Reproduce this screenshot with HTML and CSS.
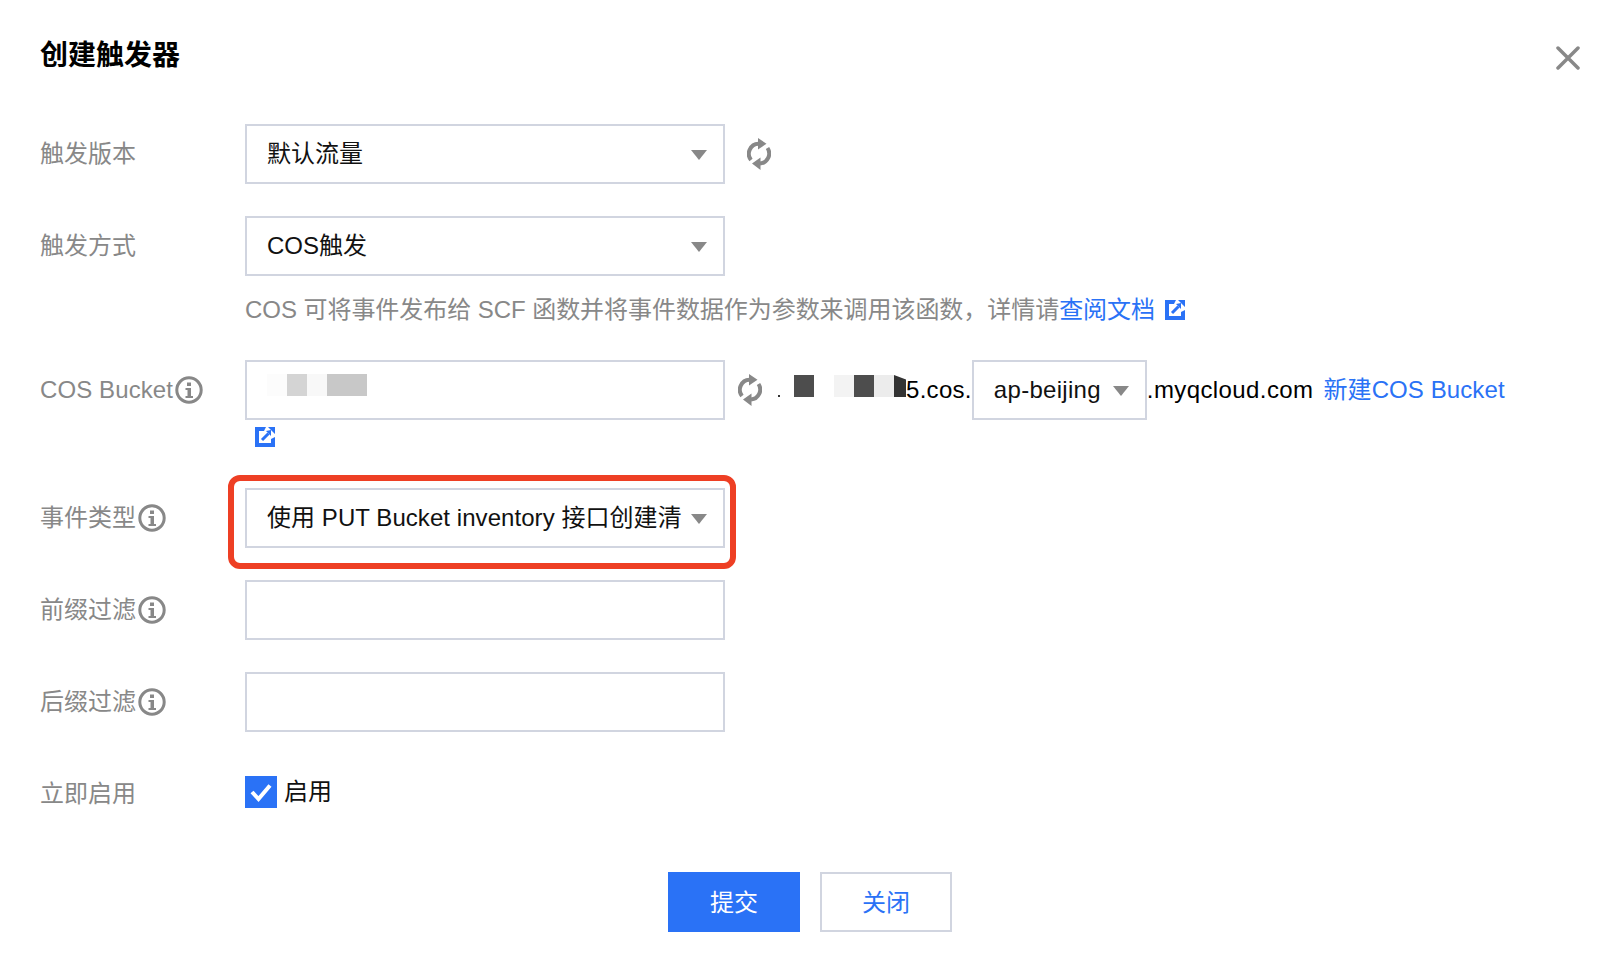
FILE: index.html
```html
<!DOCTYPE html>
<html lang="zh-CN">
<head>
    <meta charset="UTF-8">
    <title>创建触发器</title>
    <link rel="stylesheet" href="styles.css">
</head>
<body>
    <svg class="icon-defs" width="0" height="0">
        <symbol id="icon-refresh" viewBox="0 0 24 32">
            <path d="M4 22A10 10 0 0 1 11.500 5.800M20.500 10A10 10 0 0 1 13 25.500" fill="none" stroke="#888" stroke-width="4"/>
            <path d="M11 0L19.500 5.800L11 11.500ZM13.500 19.500L5 25.500L13.500 32Z" fill="#888"/>
        </symbol>
        <symbol id="icon-info" viewBox="0 0 28 28">
            <circle cx="14" cy="14" r="12.2" fill="none" stroke="#888" stroke-width="3"/>
            <path d="M12 6.500h4v3.500h-4zM10.500 12h5.500v8h2v2h-7.500v-2h2v-6h-2z" fill="#888"/>
        </symbol>
        <symbol id="icon-link" viewBox="0 0 20 20">
            <rect width="20" height="20" fill="#2a72f6"/>
            <path d="M4 4H9L11 0H13L20 7V10L16 12V16H4Z" fill="#fff"/>
            <path d="M7 13L13.500 6.500" fill="none" stroke="#2a72f6" stroke-width="3"/>
            <path d="M11 4L16 3L16 9Z" fill="#2a72f6"/>
        </symbol>
    </svg>

    <div class="dialog">
        <h1>创建触发器</h1>
        <svg class="close" width="24" height="24" viewBox="0 0 24 24">
            <path d="M2 2L22 22M22 2L2 22" stroke="#888" stroke-width="3.500" stroke-linecap="round"/>
        </svg>

        <div class="form-row">
            <div class="form-label">触发版本</div>
            <div class="select">默认流量<i class="arrow"></i></div>
            <svg class="refresh refresh-first"><use href="#icon-refresh"/></svg>
        </div>

        <div class="form-row has-hint">
            <div class="form-label">触发方式</div>
            <div class="select">COS触发<i class="arrow"></i></div>
        </div>
        <div class="hint">
            <span>COS 可将事件发布给 SCF 函数并将事件数据作为参数来调用该函数，详情请</span><a class="link">查阅文档</a>
            <svg class="ext-icon"><use href="#icon-link"/></svg>
        </div>

        <div class="form-row has-ext">
            <div class="form-label"><span class="label-en">COS Bucket</span><svg class="info"><use href="#icon-info"/></svg></div>
            <div class="input mosaic-input">
                <i class="px px-a"></i><i class="px px-b"></i><i class="px px-c"></i><i class="px px-d"></i>
            </div>
            <svg class="refresh"><use href="#icon-refresh"/></svg>
            <div class="mosaic">
                <i class="dot"></i>
                <i class="px px-dark"></i>
                <i class="px px-gap"></i>
                <i class="px px-light"></i>
                <i class="px px-dark"></i>
                <i class="px px-light2"></i>
                <i class="px px-end"></i>
            </div>
            <span class="plain">5.cos.</span>
            <div class="select select-region">ap-beijing<i class="arrow"></i></div>
            <span class="plain domain">.myqcloud.com</span>
            <a class="link new-bucket">新建COS Bucket</a>
        </div>
        <div class="ext-row"><svg class="ext-icon"><use href="#icon-link"/></svg></div>

        <div class="form-row">
            <div class="form-label">事件类型<svg class="info"><use href="#icon-info"/></svg></div>
            <div class="select highlighted">使用 PUT Bucket inventory 接口创建清<i class="arrow"></i></div>
        </div>

        <div class="form-row">
            <div class="form-label">前缀过滤<svg class="info"><use href="#icon-info"/></svg></div>
            <input class="input" type="text">
        </div>

        <div class="form-row">
            <div class="form-label">后缀过滤<svg class="info"><use href="#icon-info"/></svg></div>
            <input class="input" type="text">
        </div>

        <div class="form-row check-row">
            <div class="form-label">立即启用</div>
            <span class="checkbox">
                <svg width="32" height="32" viewBox="0 0 32 32">
                    <path d="M7 16L13.500 23L25 9.500" fill="none" stroke="#fff" stroke-width="4"/>
                </svg>
            </span>
            <span class="check-text">启用</span>
        </div>

        <div class="actions">
            <button class="btn btn-primary" type="button">提交</button>
            <button class="btn" type="button">关闭</button>
        </div>
    </div>
</body>
</html>
```

FILE: styles.css
```css
body {
    margin: 0;
    background-color: #fff;
    font-family: "Liberation Sans", "Noto Sans CJK SC", sans-serif;
    font-size: 24px;
    line-height: 30px;
    color: #000;
}
.icon-defs {
    position: absolute;
}
.dialog {
    position: relative;
    padding: 41px 38px 0 40px;
}
h1 {
    margin: 0 0 53px;
    font-size: 28px;
    line-height: 30px;
    font-weight: bold;
}
.close {
    position: absolute;
    top: 46px;
    right: 38px;
}
.form-row {
    display: flex;
    align-items: center;
    height: 60px;
    margin-bottom: 32px;
}
.form-row.has-hint {
    margin-bottom: 18px;
}
.form-row.has-ext {
    margin-bottom: 7px;
}
.form-label {
    display: flex;
    align-items: center;
    flex: none;
    width: 205px;
    color: #888;
}
.label-en {
    letter-spacing: 0.1px;
}
.info {
    width: 28px;
    height: 28px;
    flex: none;
    margin-left: 2px;
}
.select,
.input {
    box-sizing: border-box;
    flex: none;
    width: 480px;
    height: 60px;
    border: 2px solid #d1d5e0;
    background-color: #fff;
}
.select {
    position: relative;
    padding-left: 20px;
    line-height: 56px;
    color: #111;
}
.input {
    margin: 0;
    padding: 0 20px;
    border-radius: 0;
    outline: none;
}
.arrow {
    position: absolute;
    top: 24px;
    right: 16px;
    border-top: 10px solid #888;
    border-left: 8px solid transparent;
    border-right: 8px solid transparent;
}
.highlighted {
    letter-spacing: 0.06px;
}
.highlighted::after {
    content: "";
    position: absolute;
    top: -15px;
    left: -19px;
    right: -13px;
    bottom: -23px;
    border: 6px solid #ee3f24;
    border-radius: 12px;
}
.refresh {
    width: 24px;
    height: 32px;
    flex: none;
    margin-left: 13px;
}
.refresh-first {
    margin-left: 22px;
}
.mosaic-input {
    display: flex;
    padding-top: 12px;
}
.px {
    display: block;
    flex: none;
    width: 20px;
    height: 22px;
}
.px-a { background-color: #fcfcfc; }
.px-b { background-color: #d4d4d4; }
.px-c { background-color: #f8f8f8; }
.px-d { width: 40px; background-color: #c8c8c8; }
.mosaic {
    display: flex;
    align-items: center;
    margin-left: 16px;
    height: 60px;
    padding-bottom: 8px;
    box-sizing: border-box;
}
.dot {
    width: 2px;
    height: 2px;
    margin: 20px 14px 0 0;
    background-color: #333;
}
.px-dark { background-color: #4d4d4d; }
.px-gap { background-color: #fff; }
.px-light { background-color: #f3f3f3; }
.px-light2 { background-color: #ececec; }
.px-end {
    width: 12px;
    background-color: #333;
    clip-path: polygon(0 0, 100% 20%, 100% 100%, 0 100%);
}
.plain {
    flex: none;
    letter-spacing: 0.3px;
}
.domain {
    letter-spacing: 0.4px;
}
.select-region {
    width: 175px;
    letter-spacing: 0.3px;
}
.link {
    color: #2a72f6;
}
.new-bucket {
    margin-left: 10px;
    letter-spacing: 0.1px;
}
.hint {
    display: flex;
    align-items: center;
    height: 32px;
    margin: 0 0 34px 205px;
    color: #888;
    letter-spacing: -0.05px;
}
.ext-icon {
    width: 20px;
    height: 20px;
    flex: none;
}
.hint .ext-icon {
    margin-left: 10px;
}
.ext-row {
    height: 20px;
    margin: 0 0 41px 215px;
}
.ext-row .ext-icon {
    display: block;
}
.check-row {
    height: 56px;
    margin-bottom: 52px;
}
.check-row .form-label {
    padding-top: 4px;
}
.checkbox {
    flex: none;
    width: 32px;
    height: 32px;
    background-color: #2a72f6;
}
.checkbox svg {
    display: block;
}
.check-text {
    margin-left: 7px;
    color: #111;
}
.actions {
    display: flex;
    justify-content: center;
    gap: 20px;
}
.btn {
    box-sizing: border-box;
    width: 132px;
    height: 60px;
    padding: 2px 0 0;
    border: 2px solid #d1d5e0;
    background-color: #fff;
    color: #2a72f6;
    font: inherit;
}
.btn-primary {
    border-color: #2a72f6;
    background-color: #2a72f6;
    color: #fff;
}
```
